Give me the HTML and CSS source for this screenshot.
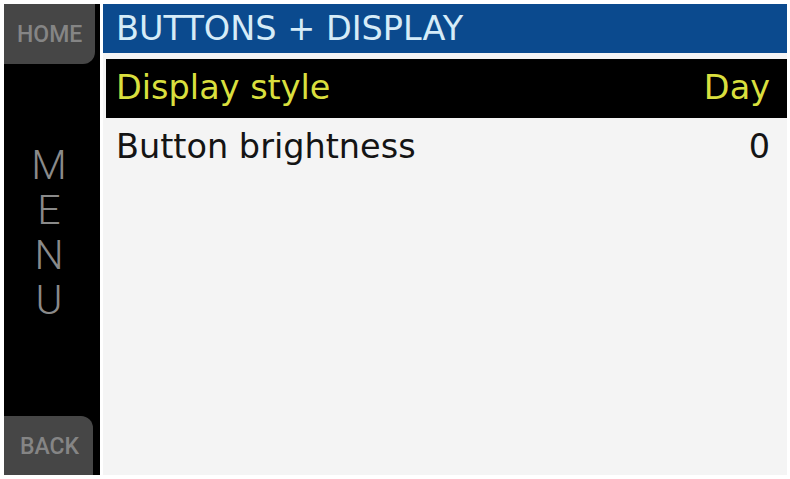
FILE: index.html
```html
<!DOCTYPE html>
<html>
<head>
<meta charset="utf-8">
<link rel="stylesheet" href="styles.css">
</head>
<body>
<div class="screen">
  <aside class="side">
    <div class="softkey softkey-home">HOME</div>
    <div class="menu-label">
      <span>M</span><span>E</span><span>N</span><span>U</span>
    </div>
    <div class="softkey softkey-back">BACK</div>
  </aside>
  <main class="main">
    <header class="title">BUTTONS + DISPLAY</header>
    <div class="list">
      <div class="row row-selected"><span class="label">Display style</span><span class="value">Day</span></div>
      <div class="row"><span class="label">Button brightness</span><span class="value">0</span></div>
    </div>
  </main>
</div>
</body>
</html>
```
FILE: styles.css
```css
html, body {
  margin: 0;
  padding: 0;
  background: #ffffff;
}

body {
  font-family: "DejaVu Sans", Roboto, sans-serif;
  width: 790px;
  height: 479px;
  overflow: hidden;
}

.screen {
  display: flex;
  padding: 4px 3px 4px 4px;
  height: 471px;
  gap: 3px;
}

.side {
  width: 96px;
  background: #000000;
  display: flex;
  flex-direction: column;
  justify-content: space-between;
}

.softkey {
  background: #464646;
  color: #858585;
  font-family: Roboto, sans-serif;
  font-size: 23px;
  font-weight: 500;
  display: flex;
  align-items: center;
  padding-left: 13px;
  width: 78px;
}

.softkey-home {
  height: 60px;
  border-bottom-right-radius: 12px;
}

.softkey-back {
  height: 57px;
  border-top-right-radius: 12px;
  padding-top: 2px;
  padding-left: 16px;
  width: 73px;
}

.menu-label {
  flex: 1;
  display: flex;
  flex-direction: column;
  align-items: center;
  padding-top: 79px;
  color: #8a8a8a;
  font-family: Roboto, sans-serif;
  font-size: 41px;
  font-weight: 300;
  line-height: 45px;
  margin-right: 6px;
}

.main {
  flex: 1;
  display: flex;
  flex-direction: column;
  background: #f4f4f4;
}

.title {
  background: #0b4a8e;
  color: #d6ecf8;
  font-size: 33.5px;
  height: 49px;
  line-height: 50px;
  padding-left: 13px;
}

.list {
  display: flex;
  flex-direction: column;
  padding: 6px 0 0 3px;
}

.row {
  display: flex;
  justify-content: space-between;
  align-items: center;
  height: 59px;
  padding: 0 17px 2px 10px;
  box-sizing: border-box;
  font-size: 33.5px;
  color: #141414;
}

.row-selected {
  background: #000000;
  color: #d9df3e;
}
```
